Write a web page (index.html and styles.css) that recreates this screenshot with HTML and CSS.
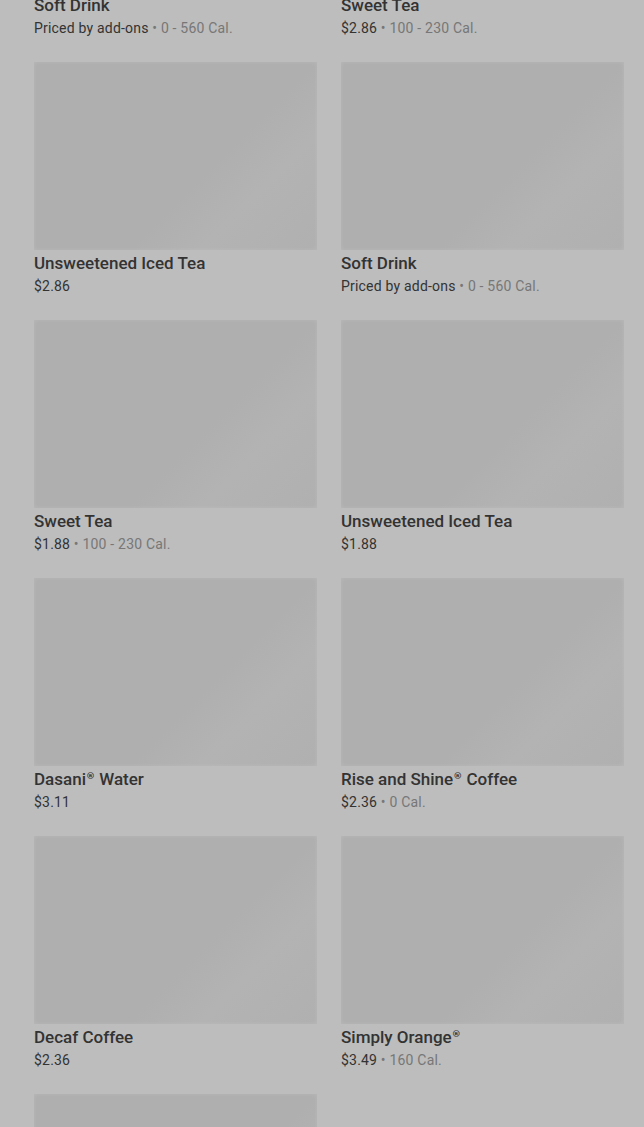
FILE: index.html
```html
<!DOCTYPE html>
<html>
<head>
<meta charset="utf-8">
<link rel="stylesheet" href="styles.css">
</head>
<body>
<div class="page">
  <div class="grid">
    <div class="card"><div class="thumb"></div><div class="name">Soft Drink</div><div class="meta">Priced by add-ons <span class="cal">• 0 - 560 Cal.</span></div></div>
    <div class="card"><div class="thumb"></div><div class="name">Sweet Tea</div><div class="meta">$2.86 <span class="cal">• 100 - 230 Cal.</span></div></div>
    <div class="card"><div class="thumb"></div><div class="name">Unsweetened Iced Tea</div><div class="meta">$2.86</div></div>
    <div class="card"><div class="thumb"></div><div class="name">Soft Drink</div><div class="meta">Priced by add-ons <span class="cal">• 0 - 560 Cal.</span></div></div>
    <div class="card"><div class="thumb"></div><div class="name">Sweet Tea</div><div class="meta">$1.88 <span class="cal">• 100 - 230 Cal.</span></div></div>
    <div class="card"><div class="thumb"></div><div class="name">Unsweetened Iced Tea</div><div class="meta">$1.88</div></div>
    <div class="card"><div class="thumb"></div><div class="name">Dasani<span class="reg">®</span> Water</div><div class="meta">$3.11</div></div>
    <div class="card"><div class="thumb"></div><div class="name">Rise and Shine<span class="reg">®</span> Coffee</div><div class="meta">$2.36 <span class="cal">• 0 Cal.</span></div></div>
    <div class="card"><div class="thumb"></div><div class="name">Decaf Coffee</div><div class="meta">$2.36</div></div>
    <div class="card"><div class="thumb"></div><div class="name">Simply Orange<span class="reg">®</span></div><div class="meta">$3.49 <span class="cal">• 160 Cal.</span></div></div>
    <div class="card"><div class="thumb"></div><div class="name">Orange Juice</div><div class="meta">$3.49</div></div>
  </div>
</div>
</body>
</html>
```
FILE: styles.css
```css
html, body {
  margin: 0;
  padding: 0;
  background: #bdbdbd;
  overflow: hidden;
  height: 1127px;
}
.page {
  padding: 0 20px 0 34px;
  font-family: Roboto, "Liberation Sans", sans-serif;
}
.grid {
  margin-top: -196px;
  display: grid;
  grid-template-columns: 283px 283px;
  column-gap: 24px;
  row-gap: 23px;
}
.card {
  display: flex;
  flex-direction: column;
}
.thumb {
  height: 188px;
  background: linear-gradient(135deg, #afafaf 0%, #afafaf 60%, #b3b3b3 75%, #b0b0b0 100%);
  box-shadow: inset 0 0 4px rgba(255,255,255,0.12);
  margin-bottom: 2px;
}
.name {
  font-size: 17px;
  font-weight: 500;
  line-height: 22px;
  color: #333;
}
.reg {
  font-family: "DejaVu Sans", sans-serif;
  font-variant-emoji: text;
  font-weight: bold;
  font-size: 9px;
  vertical-align: top;
  line-height: 16px;
  color: #333;
}
.meta {
  margin-top: 2px;
  font-size: 14px;
  line-height: 21px;
  color: #333;
  letter-spacing: 0.2px;
}
.cal {
  color: #777;
}
```
